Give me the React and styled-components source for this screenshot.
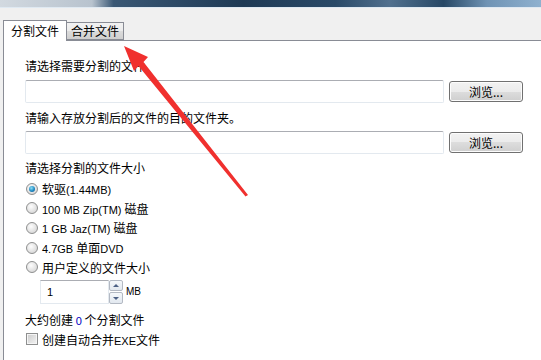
import styled, { createGlobalStyle } from 'styled-components';

const GlobalStyle = createGlobalStyle`
  html, body {
    margin: 0;
    padding: 0;
    background: #f0f0f0;
  }
  body {
    font-family: "Noto Sans CJK SC", "Liberation Sans", sans-serif;
    font-size: 12px;
    color: #000;
    overflow: hidden;
  }
`;

const Window = styled.div`
  position: relative;
  width: 541px;
  height: 360px;
  display: flex;
  flex-direction: column;
  background: #f0f0f0;
`;

const TitleStrip = styled.div`
  height: 7px;
  background: linear-gradient(
    to right,
    #d2d9e0 0%,
    #b8c3ce 17%,
    #3a5875 21%,
    #1f3a55 45%,
    #2a4a68 62%,
    #51708e 72%,
    #274866 82%,
    #6f93b4 90%,
    #8fb1cf 100%
  );
  border-bottom: 1px solid #dfe9f2;
`;

const TabBar = styled.div`
  height: 32px;
  display: flex;
  align-items: flex-end;
  padding-left: 3px;
`;

const Tab = styled.div`
  box-sizing: border-box;
  height: ${(p) => (p.$active ? '21px' : '18px')};
  padding: 0 ${(p) => (p.$active ? '7px' : '4px')};
  display: flex;
  align-items: center;
  padding-bottom: ${(p) => (p.$active ? '1px' : '0')};
  border: 1px solid #898c95;
  border-bottom: ${(p) => (p.$active ? 'none' : '1px solid #898c95')};
  margin-bottom: ${(p) => (p.$active ? '-1px' : '0')};
  margin-left: ${(p) => (p.$active ? '0' : '-1px')};
  background: ${(p) =>
    p.$active ? '#ffffff' : 'linear-gradient(#f2f2f2, #ebebeb 50%, #dcdcdc 50%, #cfcfcf)'};
  font-size: 12px;
  line-height: 14px;
  position: relative;
  z-index: ${(p) => (p.$active ? 1 : 0)};
`;

const Panel = styled.div`
  flex: 1;
  margin-left: 3px;
  background: #fff;
  border-top: 1px solid #898c95;
  border-left: 1px solid #898c95;
  padding: 17px 0 0 21px;
  display: flex;
  flex-direction: column;
`;

const Label = styled.div`
  height: 16px;
  line-height: 16px;
  margin-top: ${(p) => p.$mt || 0}px;
  white-space: nowrap;
`;

const Latin = styled.span`
  font-family: "Liberation Sans", sans-serif;
  font-size: 11px;
`;

const FieldRow = styled.div`
  display: flex;
  align-items: center;
  gap: 5px;
  margin-top: ${(p) => p.$mt || 0}px;
`;

const TextBox = styled.div`
  box-sizing: border-box;
  width: 419px;
  height: 23px;
  background: #fff;
  border: 1px solid #e3e9ef;
  border-top-color: #abadb3;
  border-radius: 2px;
`;

const Button = styled.div`
  box-sizing: border-box;
  width: 74px;
  height: 21px;
  display: flex;
  align-items: center;
  justify-content: center;
  border: 1px solid #707070;
  border-radius: 3px;
  background: linear-gradient(#f2f2f2, #ebebeb 50%, #dddddd 50%, #cfcfcf);
  box-shadow: inset 0 0 0 1px #fcfcfc;
  font-size: 12px;
`;

const Options = styled.div`
  display: flex;
  flex-direction: column;
  margin-top: 3px;
`;

const OptionRow = styled.div`
  height: 19.6px;
  display: flex;
  align-items: center;
  gap: 4px;
  white-space: nowrap;
`;

const Radio = styled.span`
  box-sizing: border-box;
  width: 12px;
  height: 12px;
  margin-left: 1px;
  border-radius: 50%;
  border: 1px solid #8e8f8f;
  background: radial-gradient(circle at 40% 35%, #fdfdfd, #dcdcdc 70%, #c8c8c8);
  display: flex;
  align-items: center;
  justify-content: center;

  &::after {
    content: '';
    display: ${(p) => (p.$checked ? 'block' : 'none')};
    width: 6px;
    height: 6px;
    border-radius: 50%;
    background: radial-gradient(circle at 40% 35%, #8fe0f6, #1f8ac3 55%, #0d4f86);
  }
`;

const SpinRow = styled.div`
  display: flex;
  align-items: center;
  margin-top: 3px;
  margin-left: 15px;
`;

const SpinInput = styled.div`
  box-sizing: border-box;
  width: 69px;
  height: 24px;
  border: 1px solid #e3e9ef;
  border-top-color: #abadb3;
  padding-left: 6px;
  display: flex;
  align-items: center;
  font-family: "Liberation Sans", sans-serif;
  font-size: 11px;
`;

const SpinButtons = styled.div`
  display: flex;
  flex-direction: column;
  width: 14px;
  height: 24px;
  gap: 1px;
`;

const SpinButton = styled.div`
  flex: 1;
  box-sizing: border-box;
  border: 1px solid #b3b9c3;
  border-radius: 2px;
  background: linear-gradient(#f5f8fb, #e2e8ef);
  display: flex;
  align-items: center;
  justify-content: center;
`;

const Arrow = styled.span`
  width: 0;
  height: 0;
  border-left: 3px solid transparent;
  border-right: 3px solid transparent;
  ${(p) => (p.$up ? 'border-bottom' : 'border-top')}: 3px solid #4d6185;
`;

const Unit = styled.span`
  margin-left: 3px;
  font-family: "Liberation Sans", sans-serif;
  font-size: 10px;
`;

const Count = styled.span`
  color: #0000c0;
  font-family: "Liberation Sans", sans-serif;
  font-size: 11px;
`;

const CheckRow = styled.div`
  display: flex;
  align-items: center;
  gap: 4px;
  margin-top: 3px;
`;

const CheckBox = styled.span`
  box-sizing: border-box;
  width: 12px;
  height: 12px;
  margin-left: 1px;
  border: 1px solid #8e8f8f;
  background: linear-gradient(135deg, #cbcbcb, #f4f4f4);
  box-shadow: inset 0 0 0 1px #f5f5f5;
`;

const Overlay = styled.svg`
  position: absolute;
  left: 0;
  top: 0;
  pointer-events: none;
`;

const sizes = [
  { text: <>软驱<Latin>(1.44MB)</Latin></>, checked: true },
  { text: <><Latin>100 MB Zip(TM) </Latin>磁盘</> },
  { text: <><Latin>1 GB Jaz(TM) </Latin>磁盘</> },
  { text: <><Latin>4.7GB </Latin>单面<Latin>DVD</Latin></> },
  { text: <>用户定义的文件大小</> },
];

export default function App() {
  return (
    <Window>
      <GlobalStyle />
      <TitleStrip />
      <TabBar>
        <Tab $active>分割文件</Tab>
        <Tab>合并文件</Tab>
      </TabBar>
      <Panel>
        <Label>请选择需要分割的文件</Label>
        <FieldRow $mt={6}>
          <TextBox />
          <Button>浏览...</Button>
        </FieldRow>
        <Label $mt={7}>请输入存放分割后的文件的目的文件夹。</Label>
        <FieldRow $mt={5}>
          <TextBox />
          <Button>浏览...</Button>
        </FieldRow>
        <Label $mt={6}>请选择分割的文件大小</Label>
        <Options>
          {sizes.map((s, i) => (
            <OptionRow key={i}>
              <Radio $checked={s.checked} />
              <span>{s.text}</span>
            </OptionRow>
          ))}
        </Options>
        <SpinRow>
          <SpinInput>1</SpinInput>
          <SpinButtons>
            <SpinButton><Arrow $up /></SpinButton>
            <SpinButton><Arrow /></SpinButton>
          </SpinButtons>
          <Unit>MB</Unit>
        </SpinRow>
        <Label $mt={8}>大约创建 <Count>0</Count> 个分割文件</Label>
        <CheckRow>
          <CheckBox />
          <span>创建自动合并<Latin>EXE</Latin>文件</span>
        </CheckRow>
      </Panel>
      <Overlay width="541" height="360" viewBox="0 0 541 360">
        <path
          d="M124 46 L148 57 L143.5 62 L248 195 L245.5 196.5 L138.5 66 L134 71 Z"
          fill="#f0302e"
        />
      </Overlay>
    </Window>
  );
}
